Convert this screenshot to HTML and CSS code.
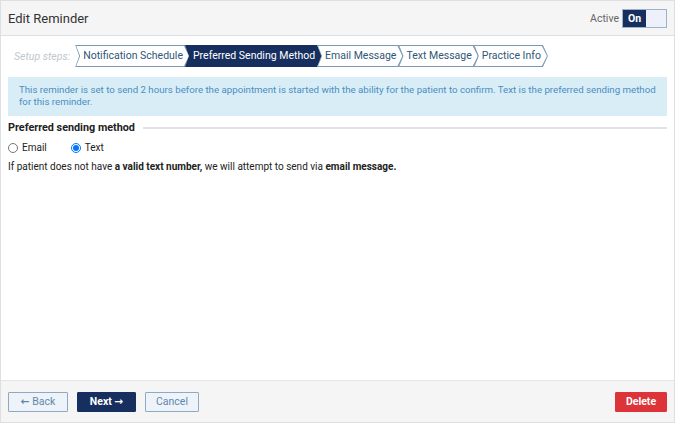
FILE: index.html
```html
<!DOCTYPE html>
<html lang="en">
<head>
    <meta charset="UTF-8">
    <title>Edit Reminder</title>
    <link rel="stylesheet" href="styles.css">
</head>
<body>
    <div class="panel">
        <div class="panel-head">
            <div class="panel-title">Edit Reminder</div>
            <div class="active-wrap">
                <span class="active-label">Active</span>
                <div class="toggle">
                    <span class="toggle-on">On</span>
                    <span class="toggle-off"></span>
                </div>
            </div>
        </div>

        <div class="panel-body">
            <div class="steps">
                <span class="steps-label">Setup steps:</span>
                <div class="step">Notification Schedule</div>
                <div class="step current">Preferred Sending Method</div>
                <div class="step">Email Message</div>
                <div class="step">Text Message</div>
                <div class="step">Practice Info</div>
            </div>

            <div class="info">
                This reminder is set to send 2 hours before the appointment is started with the ability for the patient to confirm. Text is the preferred sending method for this reminder.
            </div>

            <div class="section-title">
                <span>Preferred sending method</span>
                <div class="section-line"></div>
            </div>

            <div class="radios">
                <label class="radio"><input type="radio" name="method"> Email</label>
                <label class="radio"><input type="radio" name="method" checked> Text</label>
            </div>

            <p class="note">If patient does not have <b>a valid text number,</b> we will attempt to send via <b>email message.</b></p>
        </div>

        <div class="panel-foot">
            <button class="btn btn-light btn-back"><span class="arrow">&#8592;</span> Back</button>
            <button class="btn btn-navy">Next <span class="arrow">&#8594;</span></button>
            <button class="btn btn-light btn-cancel">Cancel</button>
            <div class="spacer"></div>
            <button class="btn btn-red">Delete</button>
        </div>
    </div>
</body>
</html>
```

FILE: styles.css
```css
html, body {
    margin: 0;
    padding: 0;
}

body {
    font-family: Roboto, "Liberation Sans", sans-serif;
    font-size: 10px;
    color: #222;
    background: #fff;
}

.panel {
    box-sizing: border-box;
    width: 675px;
    height: 423px;
    border: 1px solid #dcdfe3;
    display: flex;
    flex-direction: column;
}

.panel-head {
    height: 34px;
    background: #f5f5f5;
    border-bottom: 1px solid #dcdfe3;
    display: flex;
    align-items: center;
    padding: 0 7px;
}

.panel-title {
    font-size: 13px;
    color: #333;
    flex: 1;
}

.active-wrap {
    display: flex;
    align-items: center;
    gap: 3px;
}

.active-label {
    color: #666;
    font-size: 10.5px;
}

.toggle {
    display: flex;
    height: 19px;
    width: 45px;
    box-sizing: border-box;
    border: 1px solid #9fb3c8;
}

.toggle-on {
    width: 23px;
    background: #172f5e;
    color: #fff;
    font-weight: bold;
    font-size: 10.5px;
    text-align: center;
    line-height: 17px;
}

.toggle-off {
    flex: 1;
    background: #eef1fb;
}

.panel-body {
    flex: 1;
    padding: 9px 7px 0;
}

/* setup steps */
.steps {
    display: flex;
    align-items: center;
    height: 22px;
}

.steps-label {
    color: #c2c7cc;
    font-style: italic;
    font-size: 10.5px;
    padding-left: 6px;
    margin-right: 5px;
}

.step {
    position: relative;
    height: 22px;
    line-height: 22px;
    padding: 0 7px 0 8px;
    margin-right: -5px;
    color: #2f5679;
    font-size: 10.5px;
    white-space: nowrap;
}

.step::before,
.step::after {
    content: "";
    position: absolute;
    z-index: -1;
    clip-path: polygon(0 0, calc(100% - 5px) 0, 100% 50%, calc(100% - 5px) 100%, 0 100%, 4px 50%);
}

.step::before {
    inset: 0;
    background: #7b98b5;
}

.step::after {
    inset: 1px;
    background: #fff;
}

.step.current {
    color: #fff;
}

.step.current::before,
.step.current::after {
    background: #172f5e;
}

/* info box */
.info {
    margin-top: 10px;
    background: #d9edf7;
    color: #4a8ec2;
    font-size: 9.7px;
    padding: 7px 5px 9px 11px;
    line-height: 11.5px;
    border-radius: 1px;
}

.section-title {
    display: flex;
    align-items: center;
    margin-top: 5px;
    font-weight: bold;
    font-size: 10.8px;
    color: #222;
}

.section-line {
    flex: 1;
    height: 2px;
    background: #e2e2e2;
    margin-left: 8px;
}

.radios {
    display: flex;
    gap: 24px;
    margin-top: 8px;
}

.radio {
    display: flex;
    align-items: center;
    gap: 4px;
}

.radio input {
    margin: 0;
    width: 10px;
    height: 10px;
}

.note {
    margin: 8px 0 0;
}

/* footer */
.panel-foot {
    height: 42px;
    box-sizing: border-box;
    background: #f5f5f5;
    border-top: 1px solid #e4e4e4;
    display: flex;
    align-items: center;
    padding: 0 7px;
    gap: 9px;
}

.spacer {
    flex: 1;
}

.btn {
    font-family: Roboto, "Liberation Sans", sans-serif;
    font-size: 10.5px;
    height: 20px;
    box-sizing: border-box;
    padding: 0 6px;
    border: 1px solid;
    border-radius: 1px;
}

.arrow {
    font-family: "DejaVu Sans", sans-serif;
    font-weight: bold;
}

.btn-light {
    background: #eef3fa;
    border-color: #90a9c2;
    color: #5f87ad;
}

.btn-back {
    width: 60px;
}

.btn-cancel {
    width: 54px;
}

.btn-navy {
    width: 59px;
    background: #172f5e;
    border-color: #172f5e;
    color: #fff;
    font-weight: bold;
}

.btn-red {
    width: 52px;
    background: #dc3438;
    border-color: #dc3438;
    color: #fff;
    font-weight: bold;
}
```
